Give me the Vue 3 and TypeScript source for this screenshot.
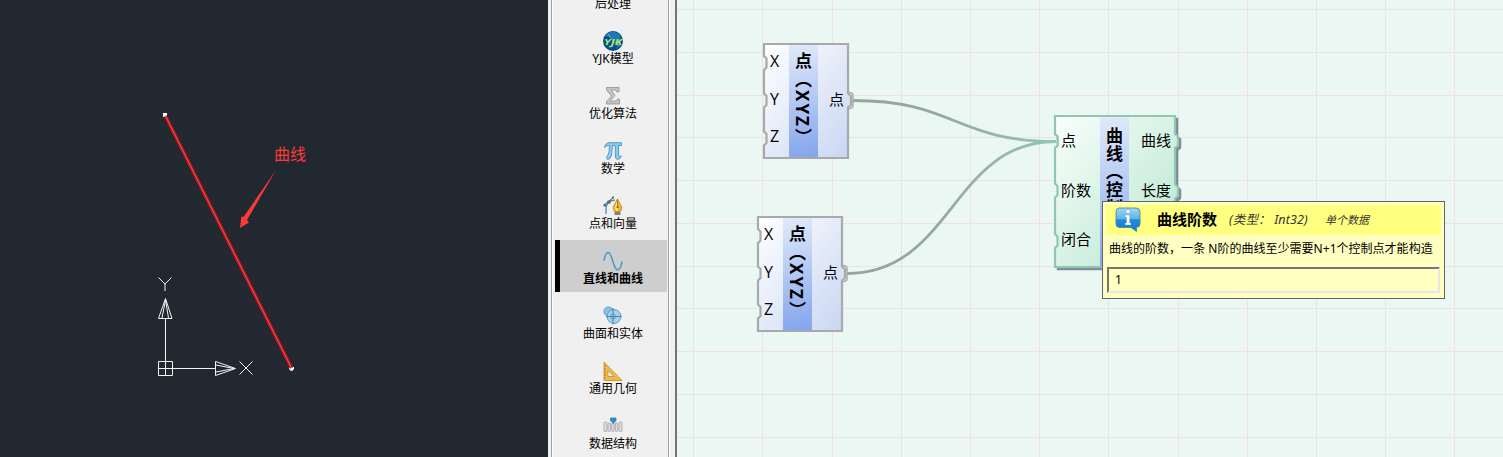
<script setup lang="ts">
interface Tool { label: string; icon: string; active?: boolean }
interface GraphNode {
  id: string
  x: number
  y: number
  w: number
  h: number
  left: number
  band: number
  title: string
  inputs: string[]
  outputs: string[]
  inY: number[]
  outY: number[]
  green: boolean
}

const tools: Tool[] = [
  { label: '后处理', icon: 'none' },
  { label: 'YJK模型', icon: 'yjk' },
  { label: '优化算法', icon: 'sigma' },
  { label: '数学', icon: 'pi' },
  { label: '点和向量', icon: 'pen' },
  { label: '直线和曲线', icon: 'wave', active: true },
  { label: '曲面和实体', icon: 'solid' },
  { label: '通用几何', icon: 'ruler' },
  { label: '数据结构', icon: 'data' },
]

const point = {
  w: 86, h: 116, left: 26, band: 29, title: '点（XYZ）',
  inputs: ['X', 'Y', 'Z'], outputs: ['点'], inY: [20, 57.5, 95.5], outY: [57.5], green: false,
}
const nodes: GraphNode[] = [
  { id: 'p1', x: 763, y: 43, ...point },
  { id: 'p2', x: 757, y: 216, ...point },
  {
    id: 'curve', x: 1054, y: 115, w: 122, h: 153, left: 46, band: 29, title: '曲线（控制',
    inputs: ['点', '阶数', '闭合'], outputs: ['曲线', '长度'],
    inY: [26, 75.5, 126], outY: [26, 76.5, 126], green: true,
  },
]

function outline(n: GraphNode): string {
  const r = n.w - 1
  const b = n.h - 1
  let d = `M1 1H${r}`
  for (const y of n.outY) d += `V${y - 7}l3 2.5v9l-3 2.5`
  d += `V${b}H1`
  for (const y of [...n.inY].reverse()) d += `V${y + 7}l2.5-2.5v-9l-2.5-2.5`
  return d + 'Z'
}

const columns = Array.from({ length: 12 }, (_, i) => Math.round(693.2 + 69.2 * i) - 677)
const rows = Array.from({ length: 11 }, (_, i) => Math.round(9.2 + 42.75 * i))
</script>

<template>
  <main class="screen">
    <section class="cad">
      <svg width="548" height="457" viewBox="0 0 548 457">
        <path d="M163 113h4v4h-4zM289 367h5v2l-2 2h-1l-2-2z" fill="#fff" />
        <path d="M165.500 116L291.500 368" stroke="#c80a10" stroke-width="3.600" />
        <path d="M165.500 116L291.500 368" stroke="#bd7273" stroke-width="1" />
        <g fill="none" stroke="#f4f4f4" stroke-width="1">
          <path d="M158.500 361.500h14v14h-14zM165.500 375.500V318.500M158.500 368.500H215.500" />
          <path d="M158.500 318.500h13.500L165.500 298.500ZM162 318L165.500 300L168.500 318" />
          <path d="M215.500 361.500v14L235.500 368.500ZM216 365L234 368.500L216 372" />
          <path d="M158.500 277.500l6.500 6.500v7M171.500 277.500l-6.500 6.500M239.500 361.500l13 13M252.500 361.500l-13 13" />
        </g>
        <path d="M276 170L243.500 217L241.300 216.500L240 228L249 222.500L247 220Z" fill="#fd3838" />
      </svg>
      <span class="cad-label">曲线</span>
    </section>

    <aside class="sidebar">
      <nav class="tools">
        <div v-for="t in tools" :key="t.label" class="tool" :class="{ active: t.active }">
          <svg class="icon" width="20" height="20" viewBox="0 0 20 20">
            <g v-if="t.icon === 'yjk'">
              <circle cx="10" cy="10" r="10" fill="#0a4a91" />
              <path d="M2 5Q9-3 17 4Q20 12 13 18Q17 9 2 5Z" fill="#1f79b8" />
              <path d="M5 3Q10 12 17 15" fill="none" stroke="#83bfe0" stroke-width=".7" />
              <text x="10" y="13.500" class="yjk" textLength="18" lengthAdjust="spacingAndGlyphs">YJK</text>
            </g>
            <path v-else-if="t.icon === 'sigma'" d="M3.500 1.500H16V6H14L13 4H8L12 9.500L7 15H13.500L14.500 13H16.500V18H3.500V15.500L8.500 10L3.500 4Z" fill="#c4c4c4" stroke="#999" stroke-width=".9" />
            <path v-else-if="t.icon === 'pi'" d="M1.500 6.500Q2.500 2 6 1.700H18.500V4.500H15.500V14Q15.700 16.500 18.500 15Q17 18.500 14.500 18.500Q12 18 12.300 14V4.500H9.500L8.500 14Q7.500 18.700 4.500 18.500Q2.500 17 4.500 15Q6.500 12 6.500 4.500Q3.500 4 1.500 6.500Z" fill="#8acbf5" stroke="#4e91bf" stroke-width=".9" />
            <g v-else-if="t.icon === 'pen'">
              <path d="M3 18V13Q3 5 12 4" fill="none" stroke="#4290c3" stroke-width="1.300" />
              <path d="M1 9L11 1" stroke="#444" stroke-width="1" />
              <path d="M.5 8h2.500v2.500H.5zM4.500 4.500h3v3h-3zM9 .5h2v2H9z" fill="#666" />
              <path d="M14.500 3L10 11.500L11.500 15.500H17.500L19 11.500Z" fill="#f3b923" stroke="#b47917" stroke-width=".7" />
              <path d="M14.500 4L12 11L13 15H14.500Z" fill="#ffe486" />
              <path d="M14.500 3V11" stroke="#8c641c" stroke-width=".7" />
              <circle cx="14.500" cy="11" r="1" fill="#6f4b14" />
              <path d="M11.500 16h6v3h-6z" fill="#8b8172" />
            </g>
            <path v-else-if="t.icon === 'wave'" d="M1 10C2 4 3.500 1.300 5.500 1.500C9 2 10 17 14 18.800C17 19.500 18.500 14 19 10.500" fill="none" stroke="#4a98c9" stroke-width="1.500" />
            <g v-else-if="t.icon === 'solid'" stroke="#4a8fbc" stroke-width=".8">
              <circle cx="5.500" cy="5.500" r="4.600" fill="#8ac0e9" />
              <circle cx="11" cy="10.500" r="7" fill="#a1d0f2" />
              <path d="M10 2V18.500M3 10.500H18.500" stroke="#53697a" />
              <circle cx="10" cy="10.500" r="2.500" fill="none" />
            </g>
            <g v-else-if="t.icon === 'ruler'">
              <path d="M1 1L19 19.500H1ZM5 9.500V15.500H11Z" fill="#f0b94c" fill-rule="evenodd" stroke="#c88b27" stroke-width=".8" />
              <path d="M1 5h2M1 8h2M1 11h2M1 14h2M1 17h2" stroke="#99712f" stroke-width=".7" />
            </g>
            <g v-else-if="t.icon === 'data'">
              <g fill="#dedede" stroke="#aaa" stroke-width=".9">
                <rect x="1" y="6" width="3" height="9.500" rx="1" /><rect x="5" y="7" width="2.500" height="8.500" rx="1" />
                <rect x="8.700" y="7" width="2.500" height="8.500" rx="1" /><rect x="12.300" y="7" width="2.500" height="8.500" rx="1" />
                <rect x="16" y="6" width="3" height="9.500" rx="1" />
              </g>
              <path d="M7.500 2h5.500V4.500L10.300 7.500L7.500 4.500Z" fill="#348dc7" stroke="#2577ad" stroke-width=".7" />
            </g>
          </svg>
          <span>{{ t.label }}</span>
        </div>
      </nav>
    </aside>

    <section class="canvas">
      <svg class="grid" width="826" height="457" viewBox="0 0 826 457" shape-rendering="crispEdges">
        <rect v-for="(x, i) in columns" :key="'c' + x" :x="x" y="0" width="1" height="457" :fill="i % 3 ? '#f0e1e2' : '#e7e3e3'" />
        <rect v-for="(y, i) in rows" :key="'r' + y" x="0" :y="y" width="826" height="1" :fill="i % 3 ? '#f0e0e0' : '#e7e3e3'" />
      </svg>
      <svg class="wires" width="826" height="457" viewBox="677 0 826 457">
        <defs>
          <linearGradient id="wire" gradientUnits="userSpaceOnUse" x1="850" y1="0" x2="1056" y2="0">
            <stop offset="0" stop-color="#98a29e" /><stop offset=".45" stop-color="#97a8a0" /><stop offset="1" stop-color="#93c7b0" />
          </linearGradient>
        </defs>
        <g fill="none" stroke="url(#wire)" stroke-width="2.800">
          <path d="M853 100.500C955 100.500 955 141.500 1056 141.500" />
          <path d="M847 273.500C952 273.500 952 141.500 1056 141.500" />
        </g>
      </svg>

      <div v-for="n in nodes" :key="n.id" class="node" :class="n.green ? 'green' : 'blue'"
        :style="{ left: n.x - 677 + 'px', top: n.y + 'px', width: n.w + 'px', height: n.h + 'px' }">
        <svg class="shape" :width="n.w" :height="n.h" :viewBox="`0 0 ${n.w} ${n.h}`">
          <defs>
            <linearGradient :id="n.id + '-body'" x1="0" y1="0" x2="1" y2="1">
              <stop offset="0" :stop-color="n.green ? '#fafefc' : '#ffffff'" /><stop offset="1" :stop-color="n.green ? '#b4e6cd' : '#c8d6f3'" />
            </linearGradient>
            <linearGradient :id="n.id + '-band'" gradientUnits="userSpaceOnUse" :x1="n.left" y1="0" :x2="n.left + 25" :y2="n.h">
              <stop offset="0" stop-color="#e2ebfb" /><stop offset="1" stop-color="#82a4ec" />
            </linearGradient>
          </defs>
          <path v-if="n.green" :d="outline(n)" transform="translate(2.500 2.500)" fill="#7f8ca0" stroke="#7f8ca0" stroke-width="1.500" />
          <path :d="outline(n)" :fill="`url(#${n.id}-body)`" />
          <rect :x="n.left" y="1" :width="n.band" :height="n.h - 2" :fill="`url(#${n.id}-band)`" />
          <path :d="outline(n)" fill="none" :stroke="n.green ? '#92c7af' : '#a9a9a9'" stroke-width="2.200" />
          <path v-if="!n.green" :d="`M${n.w} 49.500q4 0 4 3v10q0 3-4 3`" fill="none" stroke="#a9a9a9" stroke-width="1.500" />
          <path v-else d="M0 19q4 1 4 4v6q0 3-4 4" fill="none" stroke="#92c7af" stroke-width="1.500" />
        </svg>
        <div class="ports inputs" :style="{ width: n.left + 'px' }"><span v-for="p in n.inputs" :key="p">{{ p }}</span></div>
        <div class="title" :style="{ width: n.band + 'px' }">{{ n.title }}</div>
        <div class="ports outputs"><span v-for="p in n.outputs" :key="p">{{ p }}</span></div>
      </div>

      <div class="tooltip">
        <header class="tip-head">
          <svg width="26" height="26" viewBox="0 0 26 26">
            <defs>
              <linearGradient id="info" x1="0" y1="0" x2="0" y2="1">
                <stop offset="0" stop-color="#a0d5f3" /><stop offset=".45" stop-color="#62b4e7" /><stop offset=".5" stop-color="#218bda" /><stop offset="1" stop-color="#1677c7" />
              </linearGradient>
            </defs>
            <path d="M4 1H21Q25 1 25 5V17Q25 20 21.500 20.500V24.500L16 20.500H4Q1 20 1 17V5Q1 1 4 1Z" fill="url(#info)" stroke="#3983b8" stroke-width=".8" />
            <path d="M13 2.500a2 2 0 1 1-.1 0ZM10 8h4.700v8H16v2h-6v-2h1.500v-6H10Z" fill="#fff" stroke="#4a9bcc" stroke-width=".4" />
          </svg>
          <strong>曲线阶数</strong>
          <em class="kind">(类型： Int32)</em>
          <em class="single">单个数据</em>
        </header>
        <p class="tip-text">曲线的阶数，一条 N阶的曲线至少需要N+1个控制点才能构造</p>
        <div class="tip-value">1</div>
      </div>
    </section>
  </main>
</template>

<style>
body { margin: 0; overflow: hidden; }
</style>

<style scoped>
.screen { display: flex; width: 1503px; height: 457px; overflow: hidden; font-family: "Noto Sans", "Noto Sans CJK SC", sans-serif; color: #000; }
.cad { position: relative; width: 548px; height: 457px; background: #222830; flex: none; }
.cad svg { display: block; }
.cad-label { position: absolute; left: 274px; top: 142px; font: 16px/22px "Noto Sans CJK SC", sans-serif; color: #fd3838; }
.sidebar { box-sizing: border-box; flex: none; width: 129px; height: 457px; padding: 0 6px 0 3px; background: #f0f0f0; border-right: 2px solid #747474; overflow: hidden; }
.tools { box-sizing: border-box; display: flex; flex-direction: column; gap: 3px; width: 118px; height: 528px; margin-top: -35px; padding: 0 1px 0 1px; border-left: 1px solid #a0a0a0; border-right: 1px solid #a0a0a0; box-shadow: inset 1px 0 #fff, 1px 0 #fff; }
.tool { box-sizing: border-box; flex: none; display: flex; flex-direction: column; align-items: center; height: 52px; padding: 11px 0 0 4px; margin-left: 2px; font-size: 12px; line-height: 18px; white-space: nowrap; }
.tool.active { background: #cecece; font-weight: 700; box-shadow: inset 5px 0 #000; }
.tool span { margin-top: -1px; }
.icon { display: block; flex: none; overflow: visible; }
.yjk { font: italic 700 9px "Open Sans", sans-serif; fill: #a9ec5c; text-anchor: middle; }
.canvas { position: relative; flex: 1; height: 457px; background: #eaf7f3; overflow: hidden; }
.grid, .wires { position: absolute; left: 0; top: 0; }
.node { position: absolute; display: flex; font-size: 15px; }
.shape { position: absolute; left: 0; top: 0; overflow: visible; }
.ports { position: relative; display: flex; flex-direction: column; height: 113px; white-space: nowrap; }
.ports span { flex: none; height: 37.7px; line-height: 37.7px; }
.inputs { box-sizing: border-box; flex: none; padding-left: 7px; }
.blue .inputs { font-family: "Open Sans", "Noto Sans CJK SC", sans-serif; font-size: 16px; }
.outputs { flex: 1; align-items: flex-end; justify-content: center; padding-right: 5px; }
.green .ports { height: 150px; margin-top: 1px; justify-content: flex-start; }
.green .ports span { height: 49.6px; line-height: 49.6px; }
.title { box-sizing: border-box; position: relative; flex: none; padding-top: 9px; writing-mode: vertical-rl; font-weight: 700; font-size: 17px; letter-spacing: 1px; line-height: 31px; white-space: nowrap; }
.blue .title { padding-top: 8.5px; letter-spacing: 2px; }
.green .title { padding-top: 12px; }
.tooltip { box-sizing: border-box; position: absolute; left: 425px; top: 201px; width: 343px; height: 98px; padding: 3px; border: 1px solid #646464; background: #ffffc1; }
.tip-head { display: flex; align-items: center; height: 30px; padding-left: 9px; background: #ffff80; white-space: nowrap; }
.tip-head svg { flex: none; }
.tip-head strong { margin: -2px 0 0 16px; font-size: 15px; line-height: 20px; }
.tip-head em { color: #333; }
.kind { margin: -4px 0 0 12px; width: 96px; font-size: 12.5px; letter-spacing: .15px; }
.single { margin-top: -2px; font-size: 11px; }
.tip-text { margin: 5px 0 0 3px; font-size: 12px; line-height: 18px; height: 26px; white-space: nowrap; letter-spacing: .02px; }
.tip-value { box-sizing: border-box; margin: 1px 0 0 1px; width: 333px; height: 26px; padding-left: 6px; font-size: 12px; line-height: 21px; border: 2px solid; border-color: #747474 #e6e6e6 #e6e6e6 #747474; }
</style>
